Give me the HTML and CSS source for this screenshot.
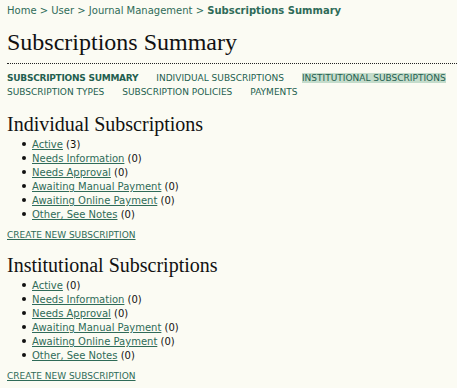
FILE: index.html
```html
<!DOCTYPE html>
<html>
<head>
<meta charset="utf-8">
<link rel="stylesheet" href="styles.css">
</head>
<body>
<div class="page">
  <div class="breadcrumb">
    <a href="#">Home</a> &gt; <a href="#">User</a> &gt; <a href="#">Journal Management</a> &gt; <a href="#" class="current">Subscriptions Summary</a>
  </div>
  <h2 class="title">Subscriptions Summary</h2>
  <div class="rule"></div>
  <ul class="menu">
    <li><a href="#" class="active">Subscriptions Summary</a></li>
    <li><a href="#">Individual Subscriptions</a></li>
    <li><a href="#" class="hl">Institutional Subscriptions</a></li>
    <li><a href="#">Subscription Types</a></li>
    <li><a href="#">Subscription Policies</a></li>
    <li><a href="#">Payments</a></li>
  </ul>

  <h3 class="section">Individual Subscriptions</h3>
  <ul class="list">
    <li><a href="#">Active</a> (3)</li>
    <li><a href="#">Needs Information</a> (0)</li>
    <li><a href="#">Needs Approval</a> (0)</li>
    <li><a href="#">Awaiting Manual Payment</a> (0)</li>
    <li><a href="#">Awaiting Online Payment</a> (0)</li>
    <li><a href="#">Other, See Notes</a> (0)</li>
  </ul>
  <a href="#" class="action">Create New Subscription</a>

  <h3 class="section">Institutional Subscriptions</h3>
  <ul class="list">
    <li><a href="#">Active</a> (0)</li>
    <li><a href="#">Needs Information</a> (0)</li>
    <li><a href="#">Needs Approval</a> (0)</li>
    <li><a href="#">Awaiting Manual Payment</a> (0)</li>
    <li><a href="#">Awaiting Online Payment</a> (0)</li>
    <li><a href="#">Other, See Notes</a> (0)</li>
  </ul>
  <a href="#" class="action">Create New Subscription</a>
</div>
</body>
</html>
```
FILE: styles.css
```css
html, body {
  margin: 0;
  padding: 0;
  background: #fbfbf3;
}
body {
  font-family: "DejaVu Sans", Verdana, sans-serif;
  font-size: 10px;
  color: #111;
}
a {
  color: #2f6b58;
}
.page {
  padding: 4px 0 0 7px;
}
.breadcrumb {
  line-height: 14px;
  color: #2f6b58;
}
.breadcrumb a {
  text-decoration: none;
}
.breadcrumb .current {
  font-weight: bold;
}
.title {
  font-family: "Liberation Serif", Georgia, serif;
  font-weight: normal;
  font-size: 24px;
  line-height: 28px;
  margin: 10px 0 7px 0;
  color: #111;
}
.rule {
  border-top: 1px dotted #222;
  margin-bottom: 7px;
}
.menu {
  list-style: none;
  margin: 0;
  padding: 0;
  display: flex;
  flex-wrap: wrap;
  column-gap: 18px;
  font-size: 9px;
  line-height: 14px;
  text-transform: uppercase;
}
.menu a {
  text-decoration: none;
  color: #245f4f;
}
.menu .active {
  font-weight: bold;
  letter-spacing: -0.25px;
}
.menu .hl {
  background: #c4dccb;
}
.section {
  font-family: "Liberation Serif", Georgia, serif;
  font-weight: normal;
  font-size: 20px;
  line-height: 24px;
  margin: 13px 0 2px 0;
  color: #111;
}
.list {
  list-style: none;
  margin: 0;
  padding-left: 15px;
  line-height: 14px;
}
.list li::before {
  content: "";
  display: inline-block;
  width: 4px;
  height: 4px;
  border-radius: 50%;
  background: #111;
  margin-right: 6px;
  vertical-align: 2px;
}
.action {
  display: inline-block;
  margin-top: 8px;
  font-size: 9px;
  text-transform: uppercase;
}
```
